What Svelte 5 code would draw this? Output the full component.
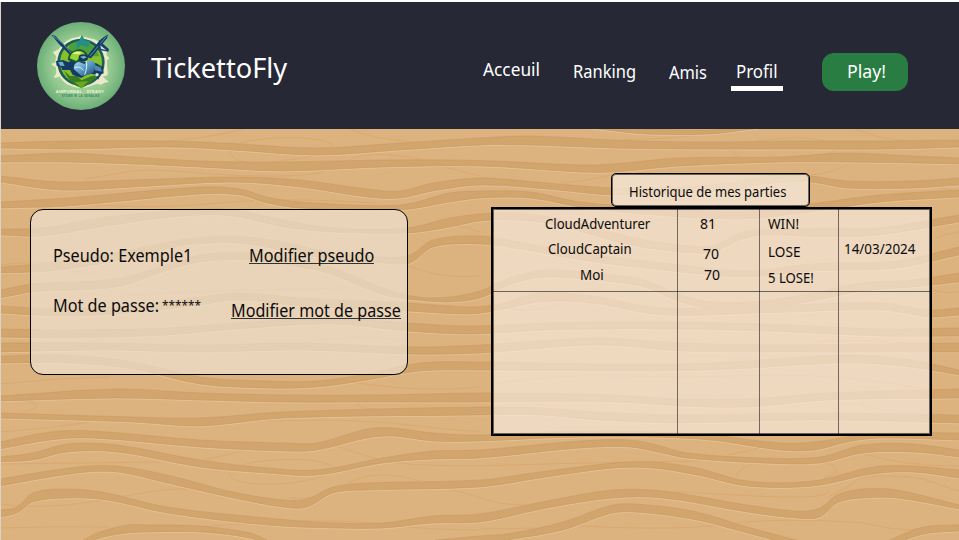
<script>
  // Wood grain bands: [x, top edge, bottom edge]
  const bands = [
    [[590,127,128],[647,129,134],[710,130,134],[760,127,128]],
    [[0,143,148],[67,141,149],[167,141,147],[233,143.5,150],[317,148,155],[400,143,150],[480,138,145],[530,136,145],[613,140,148],[690,142,149],[800,141,149],[890,141,149],[959,140,147]],
    [[0,156,162],[67,153,162],[133,157,164],[200,161,167],[283,162,171],[383,160,167],[480,160.5,166],[580,165,172],[613,164,172],[680,158,166],[780,157,162],[847,153,162],[913,156,163],[959,158,164]],
    [[0,176,182],[60,182,190],[133,180,187],[233,177,182],[300,180,187],[367,189,197],[400,191,198],[433,183,191],[480,178,185],[547,183,189],[613,188,195],[680,187,193],[730,183,190],[773,175,183],[810,176,182],[847,181,188],[913,181,188],[959,178,185]],
    [[0,202,208],[67,198,206],[200,187,194],[240,189,195],[267,197,203],[300,202,208],[400,205,210],[450,193,202],[480,191,198],[530,192,198],[580,202,207],[640,207,214],[740,212,219],[810,204,212],[880,195,202],[959,190,197]],
    [[0,229,235],[43,228,236],[100,218,227],[183,210,216],[233,210,216],[283,220,227],[333,228,232],[407,228,233],[450,218,227],[480,214,221],[513,213,220],[550,217,224],[630,237,245],[680,245,252],[713,246,252],[740,233,240],[763,230,235],[830,228,237],[880,228,235],[959,215,222]],
    [[0,267,273],[50,263,271],[100,256,264],[150,246,253],[187,239,245],[233,236,243],[283,242,250],[333,253,260],[383,257,263],[410,255,263],[433,240,247],[480,236,244],[513,241,248],[580,253,260],[680,265,272],[747,271,277],[813,264,271],[897,261,268],[959,247,255]],
    [[0,290,298],[33,284,292],[117,279,287],[160,267,273],[200,255,262],[250,253,260],[300,260,267],[333,268,275],[383,288,295],[417,297,300],[450,297,302],[480,291,298],[500,282,289],[515,276,283],[547,270,277],[613,275,282],[647,281,288],[680,295,302],[713,302,309],[763,301,308],[813,293,301],[863,283,291],[913,280,287],[959,273,282]],
    [[0,306,313],[60,309,316],[130,306,313],[200,297,305],[240,293,300],[300,298,306],[407,303,311],[470,307,314],[500,304,310],[540,293,302],[590,296,303],[663,308,315],[763,306,313],[880,303,310],[930,310,317],[959,308,315]],
    [[0,329,337],[67,330,338],[167,328,335],[250,322,328],[333,318,324],[407,323,331],[470,326,334],[550,323,330],[647,322,329],[763,324,331],[880,329,336],[959,328,336]],
    [[0,343,352],[100,343,350],[200,345,352],[300,343,350],[407,347,354],[480,345,353],[597,338,345],[680,343,351],[780,345,352],[959,343,352]],
    [[0,356,363],[67,355,363],[133,362,369],[200,377,384],[267,381,388],[317,381,387],[367,374,380],[420,363,371],[480,362,370],[600,364,371],[713,363,370],[847,355,363],[910,360,367],[959,370,375]],
    [[0,396,401],[117,389,398],[200,393,400],[283,395,402],[380,395,402],[480,393,402],[613,395,402],[680,399,406],[747,399,407],[830,393,400],[959,389,398]],
    [[0,413,418],[133,417,422],[200,418,426],[283,412,418],[480,407,415],[540,408,415],[597,412,420],[680,415,423],[813,413,420],[959,415,423]],
    [[0,442,449],[50,432,440],[93,431,438],[200,440,447],[283,443,451],[317,443,450],[367,429,438],[393,428,436],[433,433,441],[480,435,441],[580,431,437],[700,434,439],[780,443,450],[815,442,450],[847,437,442],[880,433,438],[959,433,440]],
    [[0,457,462],[33,453,460],[67,444,452],[117,445,452],[200,460,467],[267,468,473],[317,470,475],[383,458,463],[433,451,459],[480,450,458],[580,441,448],[630,440,447],[657,445,452],[687,453,458],[763,458,463],[820,457,463],[863,445,453],[913,444,452],[959,450,457]],
    [[0,479,486],[77,467,473],[117,466,472],[167,475,483],[233,492,498],[283,500,507],[307,499,507],[333,487,493],[367,483,490],[480,480,487],[540,472,478],[613,463,468],[653,462,468],[697,468,475],[747,481,486],[813,481,486],[873,467,474],[913,466,472],[959,470,478]],
    [[0,510,517],[17,507,513],[33,493,502],[67,489,498],[107,493,500],[167,507,513],[267,518,525],[333,523,528],[383,523,528],[433,516,523],[480,514,522],[547,501,508],[613,490,498],[663,491,498],[747,505,512],[797,511,518],[820,508,517],[837,495,503],[863,489,498],[897,490,498],[959,505,509]],
    [[83,540,545],[100,532,538],[127,525,533],[150,525,532],[200,526,532],[250,533,538],[267,540,545]],
    [[435,540,545],[480,536,543],[513,533,539],[563,522,530],[613,505,513],[647,505,513],[697,512,520],[747,527,533],[800,541,547]],
    [[890,540,546],[913,530,537],[930,526,533],[959,525,531]]
  ];

  const veins = [
    'M165 141Q205 139 243 129', 'M240 143C258 137 325 134 334 146', 'M230 149C226 160 250 166 275 162Q305 158 318 155',
    'M350 129Q376 140 410 141', 'M348 161C365 150 400 155 420 159', 'M85 179C120 174 130 168 172 171S300 182 332 169',
    'M440 166Q465 172 480 176', 'M90 205Q160 209 220 203T375 203', 'M0 265Q40 260 90 264', 'M0 280C10 270 18 273 31 272',
    'M70 272Q98 270 105 281', 'M408 266Q445 280 480 276', 'M425 226Q450 221 480 232', 'M120 296Q210 290 350 288',
    'M305 343Q350 332 407 341', 'M0 384Q55 378 110 377', 'M350 382Q420 393 480 387', 'M0 401C32 398 50 406 25 411',
    'M357 403Q359 409 377 409', 'M0 432Q45 429 90 422', 'M265 421Q350 418 410 425T480 431', 'M205 459Q230 455 247 449',
    'M240 466C258 458 320 456 333 467', 'M230 472C226 484 265 486 290 483Q315 480 324 475', 'M333 445Q355 452 376 459T480 466',
    'M0 464Q80 463 160 462', 'M0 504Q50 511 120 497T210 493', 'M290 498Q305 499 320 496', 'M348 483Q375 468 420 481',
    'M448 489Q470 494 480 498', 'M0 528Q55 526 110 527', 'M200 527Q235 524 258 523', 'M300 521Q350 520 390 525T480 530',
    'M620 140Q690 139 720 129', 'M755 142C780 136 812 137 829 142', 'M733 150Q734 156 739 157', 'M822 155Q834 152 836 149',
    'M855 129Q880 139 906 141', 'M564 183Q590 180 612 175', 'M811 175Q835 173 850 163', 'M480 177L494 179',
    'M494 280Q515 270 520 260', 'M590 295Q602 286 608 281', 'M508 309Q545 313 563 302', 'M815 342Q860 338 930 345',
    'M493 384Q550 374 620 376T765 375Q850 374 930 390', 'M535 402C550 403 545 409 530 410', 'M863 402Q858 407 880 409',
    'M728 455Q748 451 759 448', 'M755 463C733 472 735 475 739 479', 'M823 463C845 466 836 475 824 478',
    'M862 453Q900 466 959 466', 'M480 466Q560 463 700 461', 'M828 497Q849 487 857 480T920 478L959 491',
    'M676 492C700 492 750 497 790 497Q820 498 828 493', 'M480 498Q500 505 525 505', 'M480 529Q535 528 560 528',
    'M580 526Q680 531 730 524T865 523Q890 530 920 530', 'M930 186Q943 188 959 192', 'M935 238Q945 234 959 232', 'M933 290Q945 294 959 292'
  ];

  const n = (v) => v.toFixed(1);

  function curve(points) {
    let d = '';
    for (let i = 0; i < points.length - 1; i++) {
      const a = points[i - 1] ?? points[i];
      const b = points[i];
      const c = points[i + 1];
      const e = points[i + 2] ?? c;
      const third = (c[0] - b[0]) / 3;
      const s1 = (c[1] - a[1]) / (c[0] - a[0]);
      const s2 = (e[1] - b[1]) / (e[0] - b[0]);
      d += `C${n(b[0] + third)} ${n(b[1] + s1 * third)} ${n(c[0] - third)} ${n(c[1] - s2 * third)} ${c[0]} ${c[1]}`;
    }
    return d;
  }

  const grain = bands.map((band) => {
    const top = band.map(([x, t]) => [x, t]);
    const bottom = band.map(([x, , b]) => [x, b]);
    const back = [...bottom].reverse();
    return {
      body: `M${top[0]}${curve(top)}L${back[0]}${curve(back)}Z`,
      top: `M${top[0]}${curve(top)}`,
      bottom: `M${bottom[0]}${curve(bottom)}`
    };
  });

  const nav = [
    { text: 'Acceuil', w: 57, left: 0, top: 60 },
    { text: 'Ranking', w: 63, left: 33, top: 62 },
    { text: 'Amis', w: 38, left: 33, top: 63 },
    { text: 'Profil', w: 42, left: 29, top: 62, active: true }
  ];

  const columns = [
    [{ text: 'CloudAdventurer', w: 105, left: 52, top: 7 }, { text: 'CloudCaptain', w: 84, left: 55, top: 9 }, { text: 'Moi', w: 24, left: 87, top: 10 }],
    [{ text: '81', w: 16, left: 22, top: 7 }, { text: '70', w: 16, left: 25, top: 14 }, { text: '70', w: 16, left: 26, top: 5 }],
    [{ text: 'WIN!', w: 31, left: 8, top: 7 }, { text: 'LOSE', w: 32, left: 8, top: 12 }, { text: '5 LOSE!', w: 46, left: 8, top: 10 }],
    [{ text: '14/03/2024', w: 71, left: 5, top: 32 }]
  ];

  // Condense a label to its set width
  function fit(node, width) {
    node.style.transform = `scaleX(${width / node.offsetWidth})`;
  }
</script>

{#snippet label(text, w)}
  <span class="label" style="width:{w}px"><span class="glyphs" use:fit={w}>{text}</span></span>
{/snippet}

<div class="page">
  <svg class="wood" width="959" height="540" viewBox="0 0 959 540" aria-hidden="true">
    <rect width="959" height="540" fill="#dcb27f" />
    {#each veins as d}<path {d} class="vein" />{/each}
    {#each grain as g}
      <path d={g.bottom} class="shine" />
      <path d={g.body} fill="#d1a56c" />
      <path d={g.top} class="edge" />
      <path d={g.bottom} class="edge" />
    {/each}
    <rect width="1" height="540" fill="#ddd3c6" />
  </svg>

  <header>
    <svg class="logo" viewBox="51 36 264 264" role="img" aria-label="Logo">
      <defs>
        <radialGradient id="disc"><stop offset="0" stop-color="#b5dea5" /><stop offset=".65" stop-color="#96cb91" /><stop offset="1" stop-color="#6cae78" /></radialGradient>
        <linearGradient id="hull" x2="1" y2="1"><stop offset="0" stop-color="#b4dcec" /><stop offset=".5" stop-color="#579dc4" /><stop offset="1" stop-color="#1c4774" /></linearGradient>
      </defs>
      <circle cx="183" cy="168" r="132" fill="url(#disc)" />
      <circle cx="183" cy="157" r="77" fill="#ece9c9" />
      <path d="M120 115Q108 124 98 126Q106 136 111 141L108 160Q98 157 94 163Q101 168 107 172Q113 190 101 202Q111 205 119 198Q127 215 145 225L221 225Q231 219 243 224Q251 217 267 216Q254 208 248 199Q266 198 263 188L260 152L268 145L259 134L263 118L252 108L240 97L220 86L202 89L183 76L166 87L148 93Z" fill="#ece9c9" />
      <circle cx="183" cy="157" r="71" fill="#195f57" />
      <circle cx="183" cy="157" r="63" fill="#86c12c" />
      <path d="M146 107Q180 80 226 111L238 139L206 138L183 124L150 127Z" fill="#4c9f3d" />
      <path d="M185 74L195 91L210 93L204 112L183 105L171 117L168 95L178 92Z" fill="#278e87" />
      <path d="M132 182L150 198L171 197L184 211L213 199L231 196Q211 226 184 234Q153 226 132 182Z" fill="#397b22" />
      <path d="M164 216L205 213L184 235Z" fill="#68a91e" />
      <path d="M94 74L106 78L159 129L151 136L119 104Z" fill="#153b64" /><path d="M99 78L126 98L153 129" class="blade" />
      <path d="M257 77L264 74L261 85L213 145L199 142L239 91Z" fill="#153b64" /><path d="M259 79L209 139" class="blade" />
      <path d="M231 103L246 99L267 118L265 125L242 121Z" fill="#173e69" /><path d="M241 106L259 121L243 116Z" fill="#d7e6df" />
      <path d="M108 153L129 150L144 156L160 151L229 160L249 172L251 190L240 194L235 209L228 194L206 190L184 204L158 194L150 180L127 180L123 171L110 167Z" fill="#153b64" />
      <path d="M114 156L128 155L134 168L120 167Z" fill="#6caecb" />
      <path d="M143 150Q144 126 169 119Q193 113 205 138L195 153L168 159Z" fill="#17543f" />
      <path d="M149 145Q153 126 171 123Q190 121 197 136L180 142L169 153Z" fill="#99d62c" />
      <path d="M157 132Q169 121 184 127L179 133Z" fill="#e6ef85" />
      <ellipse cx="190" cy="143" rx="14" ry="10" fill="#14355d" /><path d="M180 140L192 137L201 142L190 147Z" fill="#6fafc1" />
      <path d="M161 177Q160 159 176 155L194 162Q203 147 220 153Q232 164 222 184Q211 198 184 197Z" fill="url(#hull)" />
      <path d="M198 153Q204 169 194 194M164 173Q181 167 190 181" fill="none" stroke="#e0f2ec" stroke-width="3" />
      <path d="M224 165L242 172L246 185L225 181Z" fill="#5287a9" /><circle cx="231" cy="194" r="5" fill="#d7e6df" />
      <text x="107" y="248" textLength="145" class="mark">AIMPURNAL · STEANY</text>
      <text x="125" y="260" textLength="113" class="submark">STUME W LA SDNALKS</text>
    </svg>
    <h1>{@render label('TickettoFly', 136)}</h1>
    <nav>
      {#each nav as item}
        <a href="#top" class:active={item.active} style="margin-left:{item.left}px;margin-top:{item.top - 2}px">{@render label(item.text, item.w)}</a>
      {/each}
    </nav>
    <button>{@render label('Play!', 39)}</button>
  </header>

  <main>
    <section class="account">
      <div class="fields">
        <p>{@render label('Pseudo: Exemple1', 139)}</p>
        <p class="secret">{@render label('Mot de passe:', 106)}<span class="stars">{@render label('******', 39)}</span></p>
      </div>
      <div class="actions">
        <a class="first" href="#pseudo">{@render label('Modifier pseudo', 125)}</a>
        <a href="#password">{@render label('Modifier mot de passe', 170)}</a>
      </div>
    </section>

    <section class="history">
      <h2>{@render label('Historique de mes parties', 157)}</h2>
      <div class="board">
        {#each columns as column}
          <div class="column">
            <div class="game">
              {#each column as cell}
                <div style="margin-left:{cell.left}px;margin-top:{cell.top}px">{@render label(cell.text, cell.w)}</div>
              {/each}
            </div>
          </div>
        {/each}
      </div>
    </section>
  </main>
</div>

<style>
  :global(body) { margin: 0; background: #fff; }
  .page { position: relative; box-sizing: border-box; width: 959px; height: 540px; padding-top: 2px; overflow: hidden; font: 17.3px/20px "Noto Sans", sans-serif; color: #0b0b0b; }
  .wood { position: absolute; inset: 0; z-index: -1; }
  .page::before { content: ''; position: absolute; inset: 0 0 auto; height: 2px; background: #fff; }
  .vein { fill: none; stroke: #d39b56; stroke-opacity: .5; stroke-width: .7; }
  .edge { fill: none; stroke: #c6935f; stroke-opacity: .4; stroke-width: 1; }
  .shine { fill: none; stroke: #e8c89d; stroke-opacity: .75; stroke-width: 1; transform: translateY(.8px); }
  .label { display: inline-block; white-space: nowrap; vertical-align: top; }
  .glyphs { display: inline-block; transform-origin: 0 50%; vertical-align: top; }
  header { display: flex; align-items: flex-start; height: 127px; margin-left: 1px; background: #262835; color: #fff; }
  .logo { flex: none; width: 88px; height: 88px; margin: 20px 0 0 36px; }
  .blade { fill: none; stroke: #81b9ce; stroke-width: 2; }
  .mark { font: bold 12px "Liberation Sans", sans-serif; fill: #f1f4d7; }
  .submark { font: bold 8px "Liberation Sans", sans-serif; fill: #287d66; }
  h1 { width: 137px; margin: 50px 0 0 26px; font-size: 28px; font-weight: 400; line-height: 30px; }
  nav { display: flex; align-items: flex-start; margin-left: 195px; }
  a { color: inherit; text-decoration: none; }
  nav a { display: block; height: 20px; }
  nav .active { position: relative; }
  .active::after { content: ''; position: absolute; left: -5px; top: 24px; width: 52px; height: 4.5px; background: #fff; }
  button { width: 86px; height: 38px; margin: 51px 0 0 44px; padding: 0 0 0 2px; border: 0; border-radius: 12px; background: #2a7d42; color: #fff; font: inherit; }
  main { display: flex; align-items: flex-start; padding-left: 30px; }
  .account { box-sizing: border-box; display: flex; width: 378px; height: 166px; margin-top: 80px; border: 1px solid #000; border-radius: 13px; background: rgba(240, 229, 217, .65); }
  .fields { width: 178px; padding: 36px 0 0 22px; }
  p { margin: 0 0 30px; height: 20px; }
  .secret { display: flex; gap: 3px; }
  .stars { font-size: 13px; line-height: 18px; }
  .actions { display: flex; flex-direction: column; padding-top: 36px; }
  .actions a { height: 17px; margin-bottom: 37px; border-bottom: 1px solid #333; align-self: flex-start; }
  .actions .first { margin-left: 18px; }
  .history { display: flex; flex-direction: column; align-items: flex-start; margin: 44px 0 0 83px; font-size: 14px; line-height: 16px; }
  h2 { box-sizing: border-box; width: 199px; height: 34px; margin: 0 0 0 120px; padding: 10px 0 0 17px; border: 1px solid #000; border-radius: 5px; box-shadow: inset 0 0 0 1px rgba(0,0,0,.55); background: rgba(248, 236, 225, .72); font-size: 14px; font-weight: 400; }
  .board { box-sizing: border-box; display: grid; grid-template-columns: 185px 82px 79px 1fr; width: 441px; height: 229px; border: 2px solid #000; box-shadow: inset 0 0 0 1px rgba(0,0,0,.55); background: rgba(248, 236, 225, .66); }
  .column + .column { border-left: 1px solid rgba(0,0,0,.52); margin-left: -1px; }
  .game { box-sizing: border-box; height: 83px; border-bottom: 1px solid rgba(0,0,0,.55); display: flex; flex-direction: column; align-items: flex-start; }
  .game > div { height: 16px; }
</style>
